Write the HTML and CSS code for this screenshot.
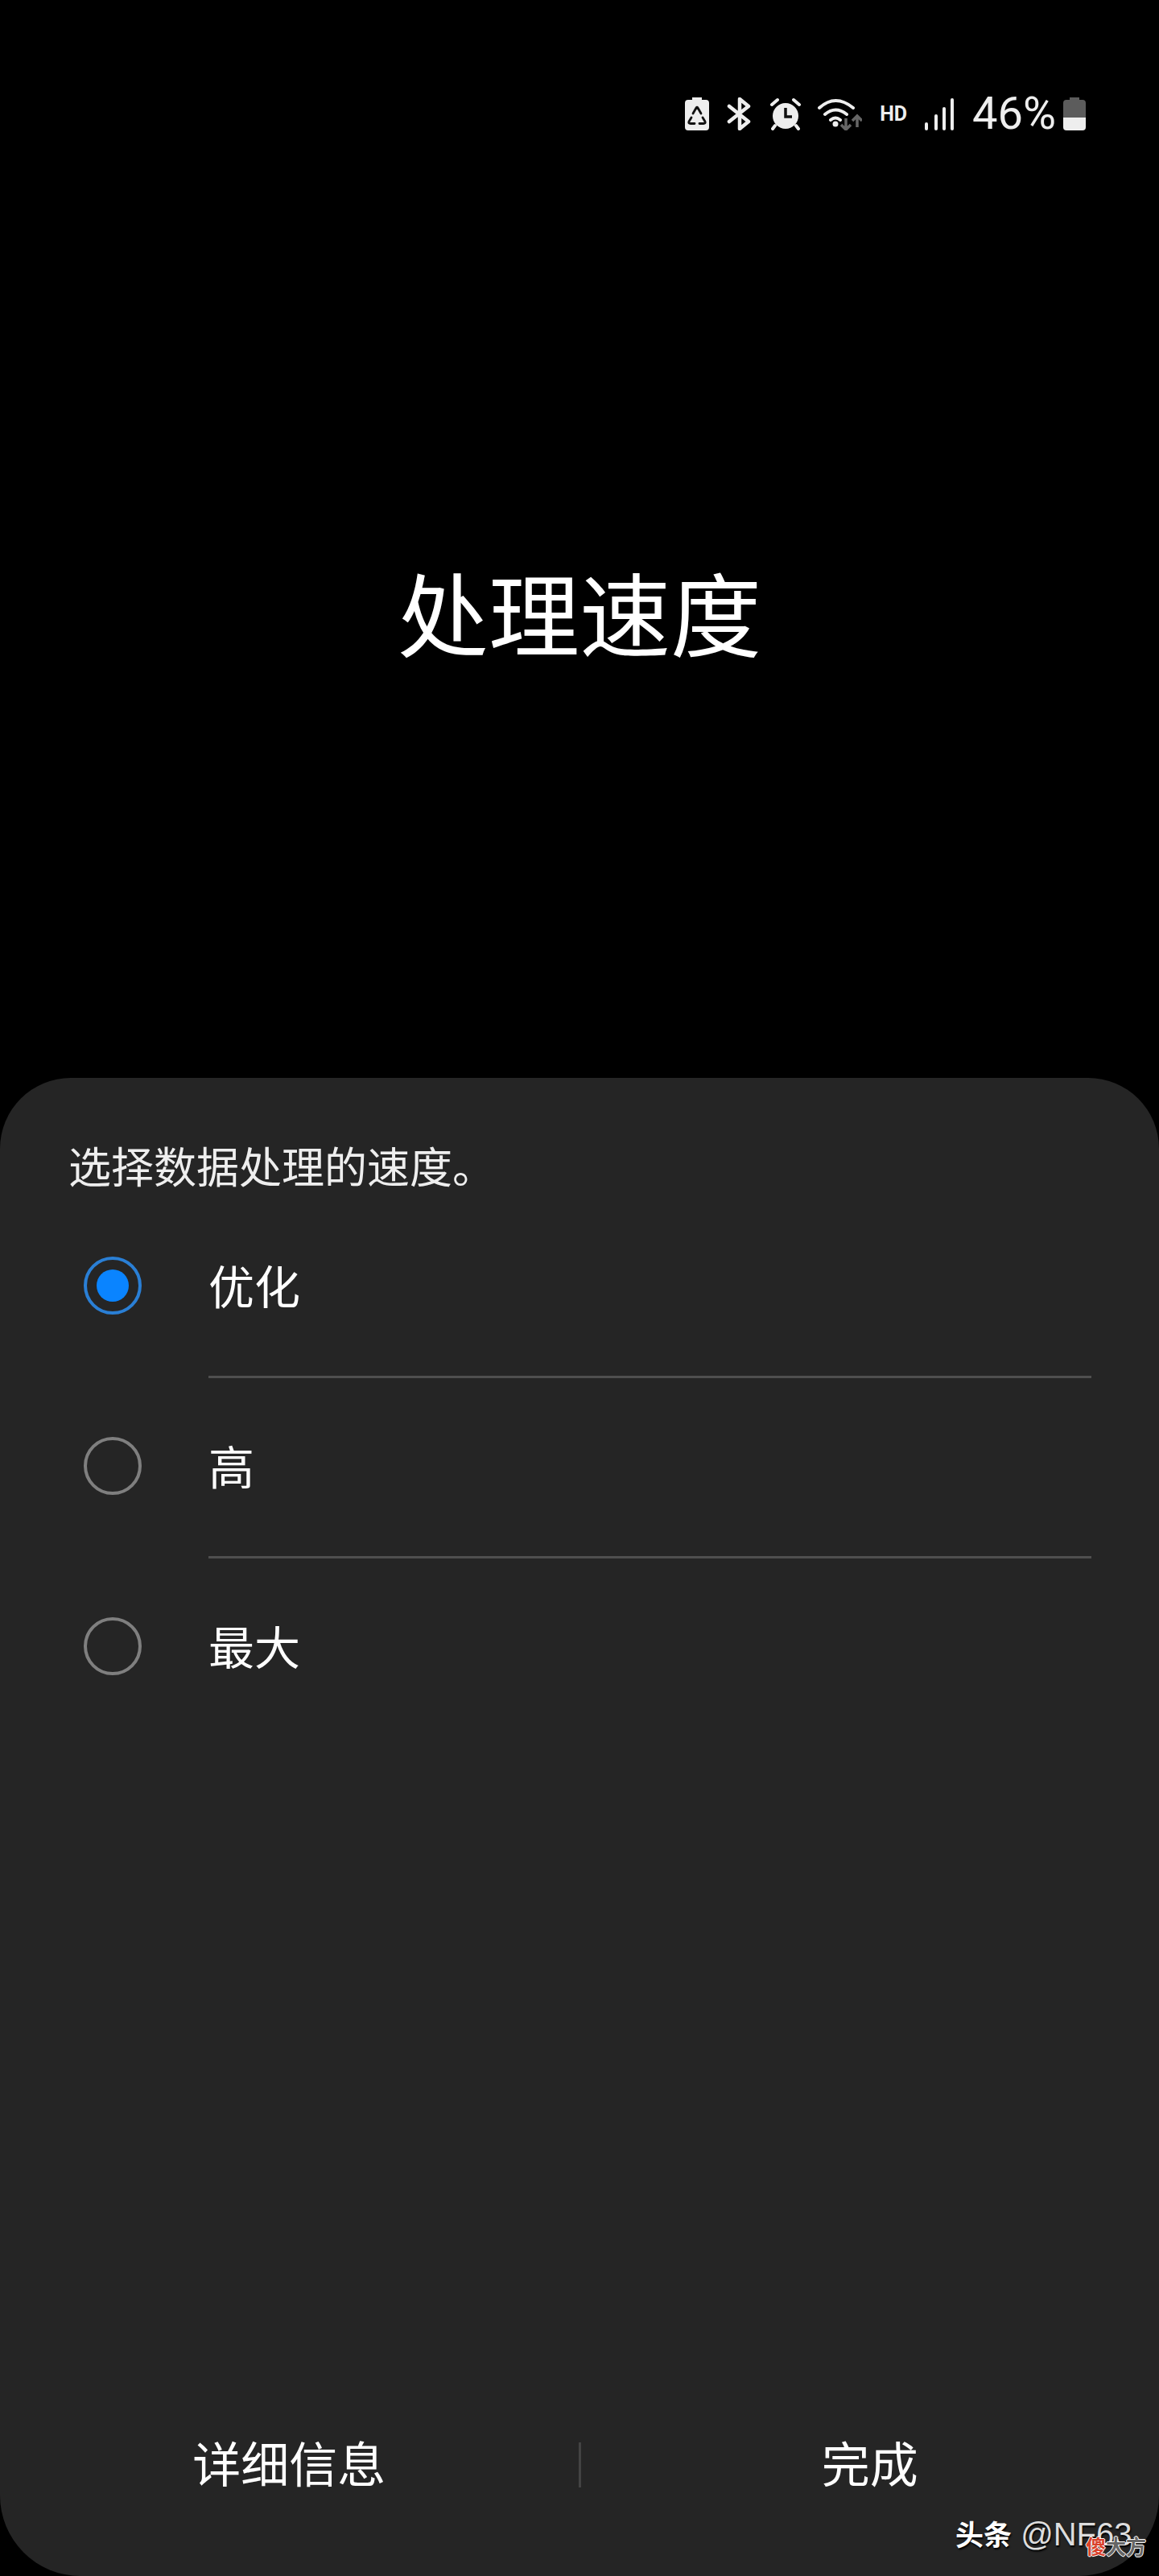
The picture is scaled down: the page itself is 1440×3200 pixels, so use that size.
FILE: index.html
```html
<!DOCTYPE html>
<html lang="zh-CN">
<head>
  <meta charset="UTF-8" />
  <title>处理速度</title>
  <link rel="stylesheet" href="styles.css">
</head>
<body>
  <div class="screen">
    <div class="statusbar">
      <svg class="icon" width="30" height="41" viewBox="0 0 30 41">
        <path d="M9 0h12v3h5a4 4 0 0 1 4 4v30a4 4 0 0 1-4 4H4a4 4 0 0 1-4-4V7a4 4 0 0 1 4-4h5z" fill="#eee"/>
        <path d="M10 20l4-7q1-1.500 2 0l4 7M8 25l-3 5q-1 2.500 2 2.500h5M18 32.500h5q3 0 2-2.500l-3-5" fill="none" stroke="#111" stroke-width="2.800" stroke-linecap="round" stroke-linejoin="round"/>
      </svg>
      <svg class="icon" width="31" height="41" viewBox="0 0 31 41">
        <path d="M3 11l24 19-11 9V2l11 9L3 30" fill="none" stroke="#eee" stroke-width="4.500" stroke-linecap="round" stroke-linejoin="round"/>
      </svg>
      <svg class="icon" width="40" height="41" viewBox="0 0 40 41">
        <circle cx="20" cy="23" r="16" fill="#eee"/>
        <path d="M20 13v11h8" fill="none" stroke="#111" stroke-width="3.500"/>
        <path d="M3 9l7-6M37 9l-7-6M7 35l-3 4M33 35l3 4" fill="none" stroke="#eee" stroke-width="4" stroke-linecap="round"/>
      </svg>
      <svg class="icon wifi" width="55" height="41" viewBox="0 0 55 41">
        <path d="M2 13q20-18 42 0M9 21q13-11 27 0M16 28q6-5 12 0" fill="none" stroke="#eee" stroke-width="4" stroke-linecap="round"/>
        <circle cx="22" cy="33" r="3.500" fill="#eee"/>
        <path d="M35 26v14M29 34l6 6 6-6M49 37V23M43 29l6-6 6 6" fill="none" stroke="#666" stroke-width="3.500"/>
      </svg>
      <span class="hd">HD</span>
      <svg class="icon" width="37" height="41" viewBox="0 0 37 41">
        <rect x="0" y="31" width="4" height="10" rx="2" fill="#eee"/>
        <rect x="12" y="21" width="4" height="20" rx="2" fill="#eee"/>
        <rect x="22" y="12" width="4" height="29" rx="2" fill="#eee"/>
        <rect x="32" y="1" width="4" height="40" rx="2" fill="#eee"/>
      </svg>
      <span class="percent">46%</span>
      <svg class="icon battery" width="28" height="41" viewBox="0 0 28 41">
        <path d="M8 0h12v3h4a4 4 0 0 1 4 4v18H0V7a4 4 0 0 1 4-4h4z" fill="#5c5c5c"/>
        <path d="M0 25h28v12a4 4 0 0 1-4 4H4a4 4 0 0 1-4-4z" fill="#eee"/>
      </svg>
    </div>

    <div class="hero">
      <h1>处理速度</h1>
    </div>

    <div class="sheet">
      <p class="desc">选择数据处理的速度。</p>

      <div class="option">
        <span class="radio radio-on"></span>
        <span class="option-label">优化</span>
      </div>
      <div class="divider"></div>
      <div class="option">
        <span class="radio"></span>
        <span class="option-label">高</span>
      </div>
      <div class="divider"></div>
      <div class="option">
        <span class="radio"></span>
        <span class="option-label">最大</span>
      </div>

      <div class="footer">
        <div class="footer-btn">详细信息</div>
        <div class="footer-sep"></div>
        <div class="footer-btn">完成</div>
      </div>

      <div class="watermark"><b>头条</b> @NF63</div>
      <div class="stamp"><span class="stamp-red">傻</span>大方</div>
    </div>
  </div>
</body>
</html>
```

FILE: styles.css
```css
body {
  margin: 0;
  background: #000;
  color: #fff;
  font-family: "Noto Sans CJK SC", "Liberation Sans", sans-serif;
}
.screen {
  height: 3200px;
  display: flex;
  flex-direction: column;
  overflow: hidden;
}

/* status bar */
.statusbar {
  height: 70px;
  padding: 121px 91px 0 0;
  display: flex;
  justify-content: flex-end;
  align-items: flex-start;
  gap: 22px;
}
.icon { display: block; flex: none; }
.wifi { margin-left: -2px; }
.hd {
  font: 700 25px/41px Roboto, sans-serif;
  color: #eee;
}
.percent {
  font: 400 56px/41px Roboto, sans-serif;
  color: #eee;
}
.battery { margin-left: -13px; }

/* title */
.hero {
  flex: 1;
  display: flex;
  align-items: center;
  justify-content: center;
  padding-bottom: 12px;
}
.hero h1 {
  margin: 0;
  font-size: 113px;
  font-weight: 400;
  line-height: 1.2;
}

/* bottom sheet */
.sheet {
  position: relative;
  height: 1861px;
  flex: none;
  background: #252525;
  border-radius: 88px 88px 100px 100px;
  display: flex;
  flex-direction: column;
}
.desc {
  margin: 0;
  padding: 70px 0 0 85px;
  font-size: 53px;
  line-height: 76px;
  color: #eee;
}
.option {
  height: 224px;
  flex: none;
  display: flex;
  align-items: center;
  padding-left: 104px;
}
.radio {
  width: 72px;
  height: 72px;
  box-sizing: border-box;
  border: 4px solid #7f7f7f;
  border-radius: 50%;
  display: flex;
  align-items: center;
  justify-content: center;
  flex: none;
}
.radio-on { border-color: #2a7fd5; }
.radio-on::after {
  content: "";
  width: 40px;
  height: 40px;
  border-radius: 50%;
  background: #0a84ff;
}
.option-label {
  margin-left: 83px;
  padding-bottom: 3px;
  font-size: 57px;
  line-height: 1.2;
}
.divider {
  height: 3px;
  margin: 0 84px -3px 259px;
  background: #4f4f4f;
}

/* footer buttons */
.footer {
  margin-top: auto;
  margin-bottom: 114px;
  height: 56px;
  display: flex;
  align-items: center;
}
.footer-btn {
  flex: 1;
  text-align: center;
  font-size: 60px;
  line-height: 56px;
}
.footer-sep {
  width: 3px;
  height: 56px;
  margin-top: 8px;
  background: #434343;
}

/* image host watermark */
.watermark {
  position: absolute;
  left: 1187px;
  top: 1783px;
  font: 40px/50px "Liberation Sans", "Noto Sans CJK SC", sans-serif;
  color: #ddd;
  white-space: nowrap;
  text-shadow: 1px 2px 2px #000;
}
.watermark b {
  font-family: "Noto Sans CJK SC", sans-serif;
  font-size: 35px;
  color: #fff;
}
.stamp {
  position: absolute;
  left: 1349px;
  top: 1808px;
  font-size: 25px;
  line-height: 30px;
  font-weight: 700;
  white-space: nowrap;
  color: #666;
  text-shadow: 1px 0 #fff, -1px 0 #fff, 0 1px #fff, 0 -1px #fff;
}
.stamp-red { color: #d9412a; }
```
